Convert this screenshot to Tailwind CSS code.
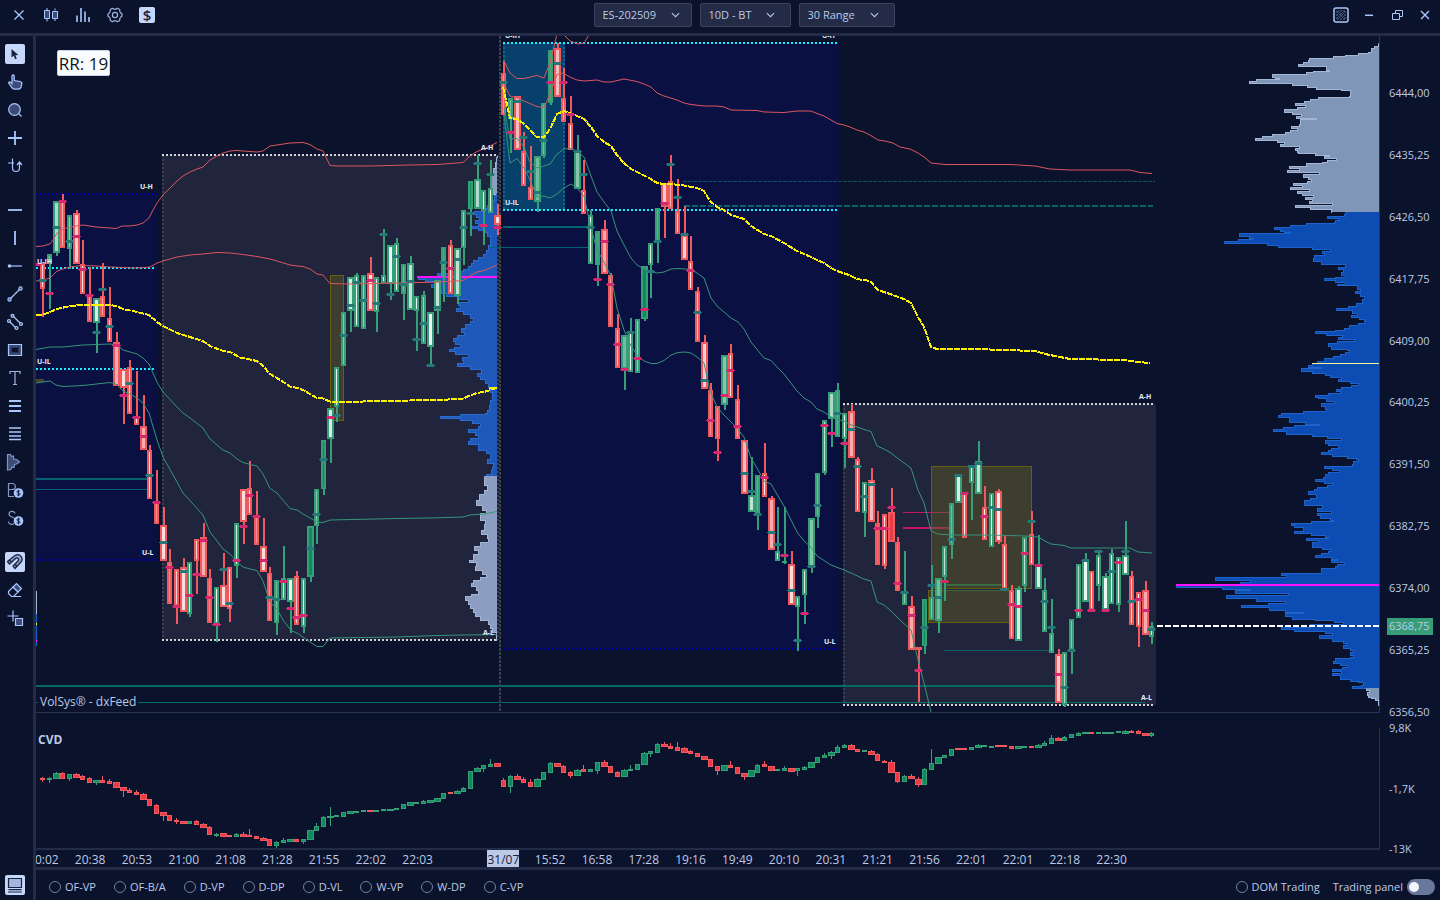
<!DOCTYPE html>
<html lang="en">
<head>
  <meta charset="UTF-8">
  <meta name="viewport" content="width=device-width, initial-scale=1.0">
  <title>VolSys - ES-202509</title>
  <script src="https://cdn.jsdelivr.net/npm/@tailwindcss/browser@4"></script>
</head>
<body class="h-screen flex flex-col overflow-hidden bg-[#0b122b] text-[#bccae8] text-[12px] leading-4 font-['Open_Sans','Noto_Sans',sans-serif]">

  <!-- top bar -->
  <header class="h-9 shrink-0 flex items-start justify-between border-b-3 border-[#242b47] pl-[11px] pr-[7px] pt-[3px]">
    <div class="h-6 flex items-center gap-4 text-[#a9c7ff]">
      <button aria-label="Close chart" class="size-4"><svg viewBox="0 0 16 16" class="size-4" fill="none" stroke="currentColor" stroke-width="1.3"><path d="M3.5 3.5l9 9M12.500 3.500l-9 9"/></svg></button>
      <button aria-label="Candle style" class="size-4"><svg viewBox="0 0 16 16" class="size-4" fill="#3c4b78" stroke="currentColor"><path d="M4 1v2M4 12v2.500M12 1.500v2M12 12v2"/><path d="M1.500 3.500h5v8h-5zM9.500 4.500h5v7h-5z"/></svg></button>
      <button aria-label="Indicators" class="size-4"><svg viewBox="0 0 16 16" class="size-4" fill="none" stroke="currentColor" stroke-width="1.600"><path d="M2 15V8.500M6 15V1M10 15V4.500M14 15v-5"/></svg></button>
      <button aria-label="Settings" class="size-4"><svg viewBox="0 0 16 16" class="size-4" fill="none" stroke="#9fb4de" stroke-width="1.200"><path stroke-linejoin="round" d="M5.500 1.300l1.500.9h2l1.500-.9 2.200 1.300.1 1.900 1 1.500 1.200 1v2l-1.200 1-1 1.500-.1 1.900-2.200 1.300-1.500-.9H7l-1.500.9-2.200-1.300-.1-1.900-1-1.500L1 9V7l1.200-1 1-1.500.1-1.900z"/><circle cx="8" cy="8" r="2.600"/></svg></button>
      <button aria-label="Account" class="size-4 rounded-xs bg-[#c5d7fb] text-[#18213f] text-[15px] leading-4 font-semibold">$</button>
    </div>

    <div class="flex gap-2">
      <label class="relative block">
        <select aria-label="Symbol" class="appearance-none w-[98px] h-6 pl-2 rounded-xs border border-[#3b4360] bg-[#232b46] text-[11px]"><option>ES-202509</option></select>
        <svg viewBox="0 0 10 6" class="absolute right-3 top-[9px] w-[9px] h-[6px]" fill="none" stroke="currentColor" stroke-width="1.200"><path d="M1 .8l4 4 4-4"/></svg>
      </label>
      <label class="relative block">
        <select aria-label="Template" class="appearance-none w-[91px] h-6 pl-2 rounded-xs border border-[#3b4360] bg-[#232b46] text-[11px]"><option>10D - BT</option></select>
        <svg viewBox="0 0 10 6" class="absolute right-4 top-[9px] w-[9px] h-[6px]" fill="none" stroke="currentColor" stroke-width="1.200"><path d="M1 .8l4 4 4-4"/></svg>
      </label>
      <label class="relative block">
        <select aria-label="Time frame" class="appearance-none w-[96px] h-6 pl-2 rounded-xs border border-[#3b4360] bg-[#232b46] text-[11px]"><option>30 Range</option></select>
        <svg viewBox="0 0 10 6" class="absolute right-4 top-[9px] w-[9px] h-[6px]" fill="none" stroke="currentColor" stroke-width="1.200"><path d="M1 .8l4 4 4-4"/></svg>
      </label>
    </div>

    <div class="h-6 flex items-center gap-3 text-[#a9c7ff]">
      <button aria-label="Background" class="size-4"><svg viewBox="0 0 16 16" class="size-4"><rect x="1" y="1" width="14" height="14" rx="2" fill="#0b122b" stroke="currentColor" stroke-width="1.500"/><path d="M3 6l3-3M3 9l6-6M3 12l9-9M4 13l9-9M7 13l6-6M10 13l3-3M10 3l3 3M7 3l6 6M4 3l9 9M3 4l9 9M3 7l6 6M3 10l3 3" stroke="#5f74a3" stroke-width=".5"/></svg></button>
      <button aria-label="Minimize" class="size-4"><svg viewBox="0 0 16 16" class="size-4" stroke="currentColor" stroke-width="1.500"><path d="M4 8.300h8"/></svg></button>
      <button aria-label="Restore" class="size-4"><svg viewBox="0 0 16 16" class="size-4" fill="none" stroke="currentColor"><path d="M3.500 6.500h7v6h-7zM6.500 6V3.500h7v6H11"/></svg></button>
      <button aria-label="Close" class="size-4"><svg viewBox="0 0 16 16" class="size-4" fill="none" stroke="currentColor" stroke-width="1.400"><path d="M4 4l8 8M12 4l-8 8"/></svg></button>
    </div>
  </header>

  <div class="flex-1 min-h-0 flex">
    <!-- drawing tools, filled by script -->
    <nav id="tools" class="w-9 shrink-0 flex flex-col border-r-3 border-[#242b47] pt-1 pb-[1px] text-[#a9c7ff]"></nav>

    <div class="flex-1 min-w-0 flex flex-col">
      <main class="flex-1 min-h-0 flex">
        <div class="flex-1 min-w-0 flex flex-col">
          <section class="relative flex-1 min-h-0">
            <svg id="chart" class="block w-full h-full" viewBox="36 36 1344 677" preserveAspectRatio="none"></svg>
            <div class="absolute left-[21px] top-[14px] w-[53px] h-[26px] rounded-xs border border-[#c9d4e6] bg-[#f8fcff] text-[#10131c] text-[17px] leading-[25px] text-center whitespace-nowrap">RR: 19</div>
            <p class="absolute left-[2px] bottom-[3px] px-[2px] bg-[#0b122b]">VolSys® - dxFeed</p>
          </section>
          <section class="relative h-[137px] shrink-0">
            <svg id="cvd" class="block w-full h-full" viewBox="36 713 1344 137" preserveAspectRatio="none"></svg>
            <h2 class="absolute left-[2px] top-[19px] font-bold">CVD</h2>
          </section>
          <div class="h-[17px] shrink-0 overflow-hidden leading-[20px]">
            <div id="times" class="flex -ml-4 text-center"></div>
          </div>
        </div>

        <!-- price scale -->
        <aside class="relative w-[60px] shrink-0 flex flex-col pt-[49px] pb-[10px] pl-[9px] text-[11px]">
          <div id="prices" class="flex-1 flex flex-col justify-between"></div>
          <div class="h-[137px] flex flex-col justify-between">
            <span>9,8K</span><span>-1,7K</span><span>-13K</span>
          </div>
          <span class="absolute left-[7px] top-[582px] w-[46px] h-[17px] pl-[2px] bg-[#369d77]">6368,75</span>
        </aside>
      </main>

      <footer class="h-[33px] shrink-0 flex items-center justify-between border-t-3 border-[#242b47] pl-[13px] pr-[5px] pt-[3px] text-[11px]">
        <div id="overlays" class="flex gap-[18px]"></div>
        <div class="flex items-center gap-[13px]">
          <label class="flex items-center gap-1"><input type="checkbox" class="appearance-none size-3 rounded-full border border-[#72809f]">DOM Trading</label>
          <label class="flex items-center gap-1">Trading panel
            <span class="relative block w-7 h-4">
              <input type="checkbox" class="appearance-none block w-7 h-4 rounded-full bg-[#68779b]">
              <span class="absolute left-[2px] top-[3px] size-[10px] rounded-full bg-[#f2f6ff] pointer-events-none"></span>
            </span>
          </label>
        </div>
      </footer>
    </div>
  </div>

  <script>
    const GREEN = '#369f78', RED = '#f0595d', TEAL = '#257877', PINK = '#d8266f';

    // ---- sidebar ----
    const F = 'fill="#3c4b78"';
    const coin = '<circle cx="12.500" cy="12" r="4.800" fill="#a9c7ff" stroke="none"/><path stroke="#18213f" stroke-width="1" d="M14.200 10.500c-.6-1-3.400-1-3.400.4s3.400.8 3.400 2.200-2.800 1.500-3.600.4M12.500 8.700v6.600"/>';
    const tools = [
      ['Cursor', '<path d="M5.500 4v8.500l2.200-1.700 1.500 3.400 1.600-.8-1.500-3.200 3-.3z" fill="#18213f" stroke="none"/>', 'on'],
      ['Hand', `<path ${F} d="M6 10.500V3c0-1.400 2.200-1.400 2.200 0v4.500l5.800 1c1.500.3 2 1 1.800 2.300l-.7 3.200c-.4 1.500-1.300 2.200-3 2.200H8.500c-1.300 0-2-.5-2.700-1.500L2.500 9.800C3.300 8.500 4.800 8.700 6 10.500z"/>`],
      ['Zoom', `<circle ${F} cx="8.500" cy="8.500" r="5.800"/><path d="M13 13l2.500 2.500"/>`],
      ['Crosshair', '<path stroke-width="1.800" d="M9 2v14M2 9h14"/>'],
      ['Sync cursor', '<path d="M6.500 1.500v9.500a3.500 3.500 0 0 0 7 0V5.500M2 6h6M11 8l2.500-3L16 8"/>'],
      'gap',
      ['Horizontal line', '<path stroke-width="1.800" d="M2 9h14"/>'],
      ['Vertical line', '<path stroke-width="1.800" d="M9 2v14"/>'],
      ['Ray', '<circle cx="3.500" cy="9" r="1.800" fill="currentColor" stroke="none"/><path d="M4 9h12"/>'],
      ['Trend line', `<path d="M4 14L14 4"/><circle ${F} cx="3.500" cy="14.500" r="1.600"/><circle ${F} cx="14.500" cy="3.500" r="1.600"/>`],
      ['Channel', `<path d="M3 8l7 7M7 3l8 8"/><circle ${F} cx="3" cy="8" r="1.500"/><circle ${F} cx="10.500" cy="15" r="1.500"/><circle ${F} cx="6.500" cy="2.800" r="1.500"/><circle ${F} cx="15" cy="11" r="1.500"/>`],
      ['Rectangle', '<path d="M2.500 3.500h13v11h-13z" fill="#3c4b78"/><path d="M5.500 6.500h7v5h-7z" fill="#0b122b" stroke="#2a3558"/>'],
      ['Text', '<path stroke="#9fb4de" d="M4 5V2.500h10V5M9 2.500v13M7 15.500h4"/>'],
      ['Levels', '<path stroke-width="1.800" d="M3 4h12M3 9h12M3 14h12"/>'],
      ['Fibonacci', '<path stroke-width="1.500" d="M3 3h12M3 7h12M3 11h12M3 14.500h12"/>'],
      ['Volume profile', `<path ${F} stroke="#7f96c4" d="M1.500 1.500h3l1 2 2-.5v3l3 .5 3 2.500-3 2-2 .5-.5 3-2-.5-1 2.500-3.500.5z"/>`],
      ['Buy', `<path stroke="#8298c5" d="M8 15.500H2.500V2.500H6c4.500 0 4.500 6 0 6H2.500M6 8.500h2"/>${coin}`],
      ['Sell', `<path stroke="#8298c5" d="M9 4.500c-.5-3-6-3-6 .5C3 9 9 7 9 11M8 14.500c-2 2-5.500.5-5.500-2"/>${coin}`],
      'gap',
      ['Magnet', '<path stroke="#18213f" stroke-width="1.300" fill="#8ea3cf" d="M1.500 8.500L9 2.500c5-3 9 3 6 6.500L9 15.500l-2-2.500 5-5c1.500-2-.5-4-2.500-2.500L3.500 11zM3.500 7l2 2.300M9 11.200l2 2.300"/>', 'on'],
      ['Eraser', `<path d="M2.500 10.500L7 6l5 5-4.500 4.500H5.500L2.500 12.500zM5 15.500h10"/><path ${F} d="M7 6l3.500-3.500 5 5L12 11z"/>`],
      ['Add shape', `<path d="M7 1.500v11M1.500 7h11"/><path ${F} d="M9.500 9.500h7v7h-7z"/>`],
      'end',
      ['Log', '<path d="M2.500 2.500h13v9h-13z" fill="#a3b5db" stroke="#18213f"/><path stroke="#18213f" d="M2.500 13.700h13M2 16h14"/>', 'on'],
    ];
    let nav = '', push = '';
    tools.forEach(t => {
      if (t === 'gap') { push = 'mt-4'; return; }
      if (t === 'end') { push = 'mt-auto'; return; }
      nav += `<button aria-label="${t[0]}" class="${push} w-[30px] h-7 flex items-center justify-center">
        <span class="size-5 flex items-center justify-center rounded-xs ${t[2] ? 'bg-[#c5d7fb]' : ''}"><svg viewBox="0 0 18 18" class="size-[18px]" fill="none" stroke="currentColor" stroke-width="1.200">${t[1]}</svg></span></button>`;
      push = '';
    });
    document.getElementById('tools').innerHTML = nav;

    // ---- scales and footer ----
    document.getElementById('prices').innerHTML =
      ['6444,00', '6435,25', '6426,50', '6417,75', '6409,00', '6400,25', '6391,50', '6382,75', '6374,00', '6365,25', '6356,50']
        .map(p => `<span>${p}</span>`).join('');
    const day1 = ['20:02', '20:38', '20:53', '21:00', '21:08', '21:28', '21:55', '22:02', '22:03'];
    const day2 = ['31/07', '15:52', '16:58', '17:28', '19:16', '19:49', '20:10', '20:31', '21:21', '21:56', '22:01', '22:01', '22:18', '22:30'];
    document.getElementById('times').innerHTML =
      `<div class="w-[421px] shrink-0 grid grid-cols-9">${day1.map(t => `<span>${t}</span>`).join('')}</div>
       <div class="w-[655px] shrink-0 ml-[39px] grid grid-cols-14">${day2.map((t, i) => `<span class="${i ? '' : 'justify-self-center w-8 bg-[#bccae8] text-[#18213f]'}">${t}</span>`).join('')}</div>`;
    document.getElementById('overlays').innerHTML =
      ['OF-VP', 'OF-B/A', 'D-VP', 'D-DP', 'D-VL', 'W-VP', 'W-DP', 'C-VP']
        .map(n => `<label class="flex items-center gap-1"><input type="checkbox" class="appearance-none size-3 rounded-full border border-[#72809f]">${n}</label>`).join('');

    // ---- price candles ----
    // x, high, top, bottom, low, up, wide, fill 0-9, marker y, marker up
    const candles = [
      [42,263,263,289,317,0,0,7,280,1],[49,254,254,263,309,1,0,4,293,0],[56,201,201,253,256,1,1,6,227,1],[62,194,201,248,248,0,0,5,201,0],[69,215,215,249,269,1,0,5,241,1],
      [76,210,213,264,264,0,1,7,236,0],[82,240,264,294,294,0,0,8,269,0],[89,267,295,322,322,0,0,4,295,0],[96,298,298,323,353,1,1,8,332,1],[102,263,296,317,317,0,0,4,289,1],
      [109,287,318,342,342,0,0,8,326,1],[116,332,342,386,386,0,1,5,345,0],[123,369,369,388,424,0,1,8,395,0],[129,360,367,414,414,0,0,7,383,1],[136,371,417,425,425,0,0,8,417,0],
      [143,395,426,450,450,0,1,5,436,0],[149,445,450,499,499,0,0,8,475,1],[156,470,502,524,524,0,0,3,502,0],[163,507,525,561,561,0,1,8,542,1],[169,549,562,604,604,0,0,3,567,0],
      [176,569,569,606,624,0,0,7,606,0],[183,558,567,612,612,0,1,8,571,1],[189,562,562,614,617,1,0,9,595,0],[196,539,539,561,594,0,0,7,574,0],[203,523,537,577,577,0,1,5,540,0],
      [209,569,578,623,623,0,0,3,597,0],[216,587,587,624,642,1,0,9,624,0],[223,553,585,607,607,0,1,8,569,1],[229,567,567,609,622,0,0,9,603,1],[236,523,523,566,578,1,0,8,560,0],
      [243,489,489,522,544,0,1,8,526,0],[249,461,488,515,515,0,0,8,495,0],[256,491,516,545,545,0,0,3,516,0],[263,518,546,572,572,0,1,8,560,0],[269,567,573,621,621,0,0,4,597,1],
      [276,580,580,623,635,1,0,3,599,1],[283,546,578,600,600,1,0,8,581,0],[290,578,578,602,633,1,1,9,608,0],[296,571,576,625,625,0,0,6,617,0],[303,578,578,627,633,1,0,8,615,0],
      [310,526,526,577,582,1,1,0,548,1],[316,489,489,526,544,1,0,4,514,1],[323,440,440,489,495,1,0,0,459,1],[330,408,408,439,463,1,1,8,417,0],[336,367,367,407,422,1,0,9,415,1],
      [343,312,312,366,366,1,0,4,335,1],[350,277,277,311,332,1,1,8,305,1],[356,273,275,327,327,1,0,9,282,1],[363,275,275,329,329,1,0,5,300,1],[370,257,273,311,311,0,1,8,280,0],
      [376,277,277,312,332,1,0,8,303,1],[383,229,275,283,283,1,0,9,234,1],[390,245,245,284,300,1,1,9,294,1],[396,238,243,292,292,1,0,9,256,1],[403,264,264,294,320,1,0,3,284,1],
      [410,256,263,310,310,1,1,7,281,1],[416,296,296,311,351,1,0,9,339,1],[423,291,295,344,344,1,0,5,323,1],[430,312,312,347,366,1,1,9,365,1],[437,280,280,311,334,1,1,7,307,1],
      [443,247,247,277,302,1,0,1,262,1],[450,240,245,294,294,0,0,9,268,0],[457,248,248,296,304,1,1,7,259,1],[463,210,210,248,265,1,0,5,227,1],[470,181,181,209,236,1,0,0,213,1],
      [477,155,179,209,209,1,1,6,163,1],[483,190,190,211,245,1,0,9,225,0],[490,160,188,213,213,1,0,9,174,1],[497,204,215,225,235,0,1,8,227,0],
      [503,61,73,115,115,0,0,4,82,1],[510,98,98,119,153,1,0,3,132,0],[517,96,96,150,150,0,1,6,101,1],[523,132,151,186,186,0,0,8,137,1],[530,146,187,200,200,0,0,6,171,1],
      [537,156,156,202,212,1,1,3,192,1],[543,103,103,156,158,1,0,3,140,1],[550,50,50,103,105,1,0,1,82,0],[557,43,48,97,97,0,1,6,63,1],[563,68,98,122,122,0,0,5,82,0],
      [570,96,123,150,150,0,0,9,114,0],[577,135,151,189,189,1,1,4,151,1],[583,160,190,214,214,0,0,9,174,1],[590,210,215,264,264,1,0,9,227,1],[597,231,231,265,286,1,0,1,279,0],
      [604,220,229,274,274,0,1,5,241,0],[610,273,275,327,327,0,0,3,284,0],[617,314,328,368,368,0,0,6,344,0],[624,335,335,369,390,1,1,3,369,0],[630,318,332,372,372,1,0,9,332,1],
      [637,319,319,373,373,1,0,5,358,0],[644,266,266,319,321,1,1,0,309,0],[650,243,243,265,298,1,0,8,271,1],[657,208,208,241,263,1,0,2,241,1],[664,183,183,207,238,0,1,7,203,0],
      [670,155,181,209,209,0,0,5,164,1],[677,179,211,234,234,0,0,7,197,1],[684,206,235,260,260,0,1,7,234,1],[690,236,261,290,290,0,0,8,270,0],[697,287,291,342,342,0,0,6,312,1],
      [704,335,342,389,389,0,1,7,380,1],[710,383,390,437,437,0,0,3,420,0],[717,406,406,439,461,0,0,4,452,0],[724,355,355,405,410,1,1,4,395,0],[730,344,353,398,398,0,0,8,370,0],
      [737,385,399,439,439,0,0,6,426,0],[744,440,440,494,494,0,1,6,473,1],[751,457,495,512,512,1,1,7,491,1],[757,475,475,513,530,1,0,2,514,1],[764,443,473,497,497,0,0,9,477,0],
      [771,496,498,550,550,0,1,5,532,1],[777,507,551,561,561,1,0,9,544,1],[784,507,561,563,564,1,0,1,555,0],[791,551,564,605,605,0,1,8,590,1],[797,596,596,607,651,1,0,8,640,1],
      [804,569,569,595,624,1,0,8,613,0],[811,518,518,568,573,1,1,4,566,1],[817,473,473,517,528,1,0,3,505,1],[824,420,420,473,475,1,0,7,425,0],[831,392,392,419,447,1,1,6,433,0],
      [837,383,390,437,437,1,0,2,413,1],[844,413,413,439,468,1,0,9,443,0],[851,404,411,458,458,0,1,5,429,1],[857,457,459,512,512,0,0,9,466,1],[864,482,482,513,537,1,0,9,496,1],
      [871,468,480,522,522,0,1,6,484,1],[877,511,523,565,565,0,0,1,528,0],[884,514,514,566,569,0,0,8,528,0],[891,488,512,542,542,0,1,0,507,0],[897,537,542,591,591,0,0,2,583,0],
      [904,551,592,605,605,1,0,4,592,1],[911,596,606,650,650,0,1,5,615,0],[918,647,647,650,702,0,1,1,670,0],[924,599,599,646,654,1,0,0,627,1],[931,565,597,620,620,1,0,4,585,1],
      [938,578,578,621,633,1,1,3,597,1],[944,546,546,577,601,1,0,7,581,0],[951,503,503,545,559,1,0,3,539,1],[958,475,475,503,503,1,1,8,475,1],[964,493,493,538,538,0,0,9,493,0],
      [971,466,466,483,520,1,0,9,466,1],[978,441,461,494,494,1,1,7,463,1],[984,486,507,540,540,0,0,9,516,0],[991,493,493,547,547,1,0,9,507,1],[998,489,491,542,544,0,1,9,509,1],
      [1004,536,544,589,589,0,0,9,589,1],[1011,585,590,639,639,0,0,7,604,0],[1018,586,588,641,641,1,1,8,606,0],[1024,537,537,586,592,1,0,7,553,0],[1031,511,534,565,565,0,0,9,521,1],
      [1038,535,565,589,589,1,1,8,565,0],[1044,578,590,632,632,1,0,5,601,1],[1051,599,633,653,653,1,0,5,627,1],[1058,649,654,703,703,0,1,7,674,0],[1064,652,652,705,707,1,0,6,687,1],
      [1071,619,619,650,674,1,0,4,650,1],[1078,564,564,618,618,1,0,6,610,0],[1085,553,560,602,602,1,1,9,560,1],[1091,571,571,610,610,0,0,9,610,0],[1098,551,555,586,601,1,0,9,551,1],
      [1105,573,576,610,610,1,1,9,610,0],[1111,549,553,604,604,1,0,9,571,1],[1118,557,557,605,612,1,0,9,562,0],[1125,521,555,575,575,1,1,9,551,1],[1131,571,576,625,625,0,0,7,601,1],
      [1138,592,592,627,647,0,0,9,599,0],[1145,581,590,635,635,0,1,5,610,0],[1151,622,626,637,644,1,0,8,629,1],
    ];

    const rect = (x, y, w, h, fill, more = '') => `<rect x="${x}" y="${y}" width="${w}" height="${h}" fill="${fill}" ${more}/>`;
    const hline = (x1, x2, y, color, w = 1, dash = '') =>
      `<path d="M${x1} ${y}H${x2}" stroke="${color}" stroke-width="${w}" stroke-dasharray="${dash}"/>`;
    const vline = (x, y1, y2, color, w = 1, dash = '') =>
      `<path d="M${x} ${y1}V${y2}" stroke="${color}" stroke-width="${w}" stroke-dasharray="${dash}"/>`;
    const band = (pts, color, w = 1, dash = '') =>
      `<polyline points="${pts}" fill="none" stroke="${color}" stroke-width="${w}" stroke-dasharray="${dash}" shape-rendering="${w > 1 ? 'crispEdges' : 'auto'}"/>`;

    // stepped volume profile that grows leftwards from the base
    function profile(base, rows, fill, edge) {
      const p = rows.split(' ').map(r => r.split(',').map(Number));
      let d = '';
      p.forEach(([y, x], i) => { d += (i ? 'V' + y + 'H' + x : 'M' + x + ' ' + y); });
      const end = p[p.length - 1][0], start = p[0][0];
      return `<path d="${d}H${base}V${start}Z" fill="${fill}"/><path transform="translate(0 .5)" d="${d}" fill="none" stroke="${edge}"/>`;
    }

    let s = '';
    // session boxes
    s += rect(36, 194, 121, 367, '#0b1043') + hline(36, 157, 194, '#00009a', 2, '2 2') + hline(36, 157, 560, '#00009a', 2, '2 2');
    s += rect(162, 155, 336, 485, '#20243d') + vline(163, 155, 640, '#3a3f56', 2, '2 2') + vline(498, 155, 640, '#3a3f56', 2, '2 2');
    s += rect(503, 43, 336, 606, '#0b1043') + hline(503, 839, 649, '#00009a', 2, '2 2') + vline(503.5, 210, 649, '#070a78', 1, '2 2');
    s += rect(503, 43, 62, 167, '#08406c') + vline(564, 43, 210, '#0c6c95', 2, '2 2') + vline(504, 43, 210, '#0c6c95', 2, '2 2');
    s += rect(843, 404, 313, 301, '#20243d') + vline(844, 404, 705, '#3a3f56', 2, '2 2');

    // levels
    s += hline(36, 148, 479, '#036270', 2) + hline(36, 148, 489.5, '#036270');
    s += hline(36, 1055, 686, '#046b63', 2) + hline(36, 1145, 702.5, '#046b63');
    s += hline(683, 1155, 181.5, '#0b5060', 1, '4 1') + hline(684, 1153, 206, '#0b6265', 2, '6 2');
    s += hline(903, 950, 512.5, '#c71463') + hline(903, 950, 528, '#c71463', 2);
    s += hline(944, 1050, 650.5, '#0b6265');

    // volume profiles
    s += profile(497, '155,497 157,496 162,495 168,493 175,491 182,490 188,492 194,496', '#8b9dc0', '#a3b4d4');
    s += profile(497, '194,496 195,494 200,491 205,487 208,482 211,474 214,476 217,479 220,475 223,478 226,472 228,478 230,485 232,487 236,490 245,488 250,486 254,483 257,478 260,473 263,471 266,468 269,463 271,450 273,437 275,440 277,418 279,425 281,435 284,431 287,440 290,441 293,446 296,457 299,468 302,458 305,460 308,456 311,463 314,470 318,473 321,470 324,465 328,461 332,464 335,457 338,453 341,455 344,460 347,454 349,449 351,455 354,468 357,462 360,463 363,457 366,470 369,481 373,477 376,480 379,485 383,488 387,490 392,492 400,490 405,489 410,487 413,485 414,460 416,440 418,460 420,472 423,480 426,478 429,468 432,475 435,478 438,470 441,468 444,478 447,478 450,486 453,490 456,490 459,487 463,493 467,492 470,491 474,486 476,484', '#1e58b8', '#2b6cd0');
    s += profile(497, '476,484 480,484 485,487 490,484 494,479 500,476 505,482 510,486 513,480 516,480 520,485 524,484 530,481 534,487 538,488 542,480 546,474 550,478 554,473 560,469 562,476 566,475 570,482 574,486 577,480 580,473 583,471 586,476 590,478 594,471 596,465 600,468 604,470 608,473 612,475 616,480 620,488 624,490 628,492 632,496 640,497', '#8b9dc0', '#a3b4d4');
    s += profile(1379, '43,1378 46,1374 48,1371 52,1368 53,1358 55,1345 56,1333 58,1309 60,1308 62,1303 64,1298 66,1326 70,1329 71,1313 72,1306 74,1272 77,1275 78,1279 79,1256 81,1249 83,1292 85,1307 87,1316 89,1341 90,1350 96,1349 97,1318 99,1310 101,1304 103,1295 105,1305 107,1297 109,1284 112,1292 114,1301 116,1296 118,1316 119,1300 124,1299 126,1291 128,1297 130,1290 132,1285 134,1272 136,1262 138,1255 140,1277 142,1284 144,1280 146,1299 148,1295 150,1297 152,1298 153,1315 155,1329 156,1324 158,1336 160,1327 162,1322 163,1306 166,1289 168,1299 170,1287 172,1319 174,1303 177,1308 179,1311 181,1307 183,1293 185,1302 187,1290 189,1309 191,1297 193,1302 195,1313 197,1305 199,1312 201,1309 203,1332 205,1295 207,1310 209,1331 212,1332', '#8096b9', '#a3b6d6');
    s += profile(1379, '212,1345 214,1344 216,1327 218,1338 220,1335 222,1334 223,1306 225,1290 227,1274 229,1280 231,1284 232,1290 233,1239 236,1249 238,1252 239,1238 241,1224 243,1267 245,1278 247,1312 249,1330 251,1322 253,1324 255,1314 258,1313 261,1321 264,1345 267,1338 269,1343 272,1341 275,1345 277,1335 278,1324 280,1335 282,1345 284,1337 285,1357 289,1360 291,1355 293,1360 296,1364 299,1362 303,1356 306,1348 308,1336 310,1352 313,1357 315,1351 317,1359 319,1364 321,1365 323,1358 325,1349 328,1344 330,1335 331,1315 333,1326 335,1342 337,1338 339,1354 341,1337 343,1328 346,1331 349,1347 350,1349 352,1345 354,1340 356,1333 358,1324 361,1317 363,1312 365,1308 367,1321 368,1301 371,1312 373,1325 375,1330 377,1341 379,1338 381,1350 383,1358 385,1351 387,1341 389,1336 391,1340 393,1328 395,1315 397,1318 398,1326 401,1334 403,1321 406,1325 409,1326 411,1303 413,1281 415,1278 417,1289 422,1305 424,1319 425,1294 427,1283 429,1273 431,1286 434,1312 436,1327 438,1341 440,1325 443,1328 445,1338 448,1331 450,1328 452,1321 454,1332 456,1347 458,1356 459,1358 461,1353 464,1352 466,1324 468,1332 470,1339 472,1328 474,1325 477,1323 479,1315 481,1324 483,1332 485,1327 487,1317 489,1314 491,1308 494,1316 498,1310 500,1304 505,1322 508,1317 511,1331 513,1317 515,1320 518,1330 520,1333 521,1311 523,1291 525,1294 527,1303 531,1294 533,1311 535,1325 537,1328 538,1306 540,1318 542,1312 547,1322 549,1330 551,1328 553,1321 555,1315 557,1331 559,1337 560,1331 562,1344 564,1337 566,1335 568,1321 571,1321 573,1281 575,1286 577,1215 580,1250 582,1240 584,1176 587,1222 589,1250 590,1235 593,1288 595,1226 598,1256 601,1285 603,1268 605,1241 607,1269 610,1285 612,1303 613,1285 616,1292 619,1315 620,1334 622,1343 624,1310 627,1281 629,1294 631,1325 633,1332 635,1319 638,1332 641,1343 643,1346 645,1343 648,1350 650,1353 652,1350 655,1353 657,1350 658,1335 661,1333 663,1340 665,1347 667,1342 669,1332 671,1341 673,1332 675,1340 679,1350 681,1358 682,1363 685,1361 686,1352 688,1366', '#0d4db3', '#1d63cc');
    s += profile(1379, '688,1366 690,1369 692,1367 695,1368 697,1371 698,1375 700,1378 705,1379', '#8096b9', '#a3b6d6');
    s += hline(1312, 1379, 363.5, '#f4f59a') + hline(1176, 1379, 585, '#ff12ff', 2);
    s += hline(417, 497, 277, '#ff12ff', 2) + hline(489, 497, 388, '#ffee00', 2);
    s += vline(36.5, 591, 614, '#a3b6d6') + vline(36.5, 614, 646, '#1d63cc') + rect(36, 623, 1, 2, '#ffee00') + rect(36, 640, 1, 2, '#ff12ff');
    s += hline(503, 588, 227, '#036270', 2) + hline(490, 588, 247.5, '#036270');

    // imbalance areas
    const olive = 'stroke="#65600f" fill-opacity=".75"';
    s += rect(330.5, 275.5, 13, 145, '#47462c', olive) + rect(931.5, 466.5, 100, 122, '#47462c', olive) + rect(928.5, 590.5, 83, 32, '#47462c', olive) + rect(36, 379, 8, 3, '#47462c');
    s += hline(932, 950, 512.5, '#8f3a50') + hline(932, 950, 528, '#8f3a50', 2) + hline(944, 1004, 585, '#3a6a40', 2) + hline(944, 1004, 590.5, '#3a6a40');

    // session separator and dotted extremes
    s += vline(500, 36, 712, '#3d404e', 2, '3 1');
    [[36, 154, 268], [36, 154, 369], [503, 838, 43], [503, 838, 210]].forEach(l => { s += hline(...l, '#19f0ff', 2, '2 2'); });
    [[162, 497, 155], [162, 497, 640], [843, 1154, 404], [843, 1154, 705]].forEach(l => { s += hline(...l, '#d3d4d8', 2, '2 2'); });

    // candle bodies first, their markers go on top of the bands
    let bodies = '', marks = rect(36, 263, 5, 3, PINK);
    candles.forEach(([x, hi, top, bot, lo, up, wide, fill, my, mup]) => {
      const c = up ? GREEN : RED, w = wide ? 7 : 5, left = wide ? x - 3 : x - 2;
      bodies += rect(x, hi, 2, lo - hi, c) + rect(left, top, w, bot - top, c);
      if (bot - top > 4) {
        bodies += fill === 0
          ? rect(left + 2, top + 2, w - 4, bot - top - 4, up ? '#0f8a5c' : '#ea3a44')
          : rect(left + 2, top + 2, w - 4, bot - top - 4, '#fff', `fill-opacity="${fill / 10}"`);
      }
      const m = mup ? TEAL : PINK;
      marks += rect(x - 3, my - 1, 7, 3, m) + rect(x - 4, my, 9, 1, m);
    });
    s += bodies;

    const up1 = '#d9575f', dn1 = '#36947a';
    s += band('36,246.5 43,246 50,244 53,240 57,233 63,229 70,227 76,226 83,225 96,227 110,228 116,228.5 122,226 130,226 137,225 143,223 149,218 153,210 157,203 163,195 170,188 177,181 183,176 190,172 197,169 203,167 210,160 217,156 223,153 230,151 237,150.5 243,151 257,152 263,151 270,146 277,145 290,143 303,142.5 310,144.5 317,149 323,151 330,165.5 337,166 370,166 410,165 437,164.5 450,163.5 463,162.5 470,156 477,151.5 484,149 490,146 497,142.5', up1);
    s += band('36,281 43,280 50,278 53,275 57,271 63,269 70,267 77,266 83,265.5 97,266 110,267 137,268 150,267 157,263 163,261 177,257 190,255 203,254 217,252.5 230,253 243,254.5 257,256.5 270,259 277,261 290,265 297,266 303,266.5 310,269 317,274 323,275 330,283.5 350,284 400,283 440,282 463,280.5 470,276 477,272 484,270.5 490,268 497,265', up1);
    s += band('36,349.5 50,347 63,347 83,345 110,344 117,345 123,350 137,354 143,358 149,364 157,382 163,392 177,407 183,413 190,418 203,428 210,439 223,450 230,453 237,459 243,462.5 250,464.5 257,466 263,474 270,488.5 277,493 290,508.5 297,510 303,514 310,518 317,522 323,522.5 330,520 397,518.5 430,518 463,517 470,515 484,514 497,511.5', dn1);
    s += band('36,383 50,381 56,385 63,386.5 83,385.5 110,382.5 116,384 123,391 130,394 137,398 143,403 149,413 157,440 163,457 177,482 183,493 203,515 210,532 217,541 223,549 230,554 237,562 243,567 250,569 257,570.5 263,581 270,602 277,609 283,620 291,630.5 297,633 303,637 310,642 317,646.5 323,646.5 330,638 397,637 437,635.5 463,635 497,634.5', dn1);
    s += band('504,61 510,73 517,78.5 524,78.5 537,75.5 544,78 550,63 557,34', up1) + band('564,35 570,41 578,44 584,43 589,35', up1);
    s += band('504,84 510,96 517,98 524,101 537,106.5 544,107.5 550,94 557,74.5 563,73 570,77 577,80 584,81 597,80 604,82 611,82 624,79 637,81.5 644,84 651,87 657,93 664,96 677,100 684,103 691,104.5 704,106 717,106 724,107 731,110 757,110.5 764,112 784,112.5 797,111 811,111 817,113.5 824,116 831,120 837,123.5 844,125 850,127 857,130 864,132 870,135 878,140 885,141 893,143 900,147 910,149 918,153 924,157 931,163 945,164.5 1010,164.5 1035,166 1050,169 1070,170 1130,170 1140,172.5 1152,173.5', up1);
    s += band('504,108 510,139 517,138.5 524,147 530,162 537,168 544,166 550,164 557,154 564,149 571,148.5 577,151 584,157 591,176 597,192 604,202 611,211 617,231 624,245 631,258 637,265 644,269 651,271.5 657,273 664,272 671,269 678,268.5 691,269.5 697,273 704,278 711,298 717,306 724,312 731,318 738,322 744,329 751,342 764,358 771,360.5 777,367 784,374 797,391 804,398 811,402 817,409 824,412 831,417 838,419.5 844,421 850,424.5 864,429.5 871,431.5 877,446 884,449 891,453 900,460 911,468 918,490 924,503 931,531 938,534 951,535 990,535 1025,536 1038,537 1045,541 1051,544 1064,545.5 1071,548 1130,548 1138,552 1152,553', dn1);
    s += band('504,115 510,163 517,158.5 524,168 530,180 537,197 544,196 550,198 557,194 564,188 571,184 577,188 584,196 587,210 591,228 597,250 604,262 611,276 617,308 624,330 631,346 637,355 644,361 651,363.5 657,363.5 664,360.5 671,355 678,352.5 685,352 691,353 697,357 704,363 710,391 717,407 724,415 731,422 737,428 744,437 751,458 757,468 764,481 771,484 778,496 784,506 797,532 804,541 811,547 817,556 831,565 844,570 851,573 864,579 871,581 877,602 884,605 891,611 900,620 911,630 918,660 924,683 931,712', dn1);
    const vwap = ['36,315 43,314.5 50,312 57,309 70,306 83,305 97,305 110,305 116,306 123,309 137,312 149,315 157,322 163,326 177,333 190,337 203,341 210,346 223,351 230,352 240,357.5 257,361 263,366 270,374 277,378 290,386.5 297,388 303,390 317,398 323,398.5 330,401.5 363,401.5 410,400.5 440,400 463,398.5 470,395.5 477,393 484,392 497,388',
      '503,87 510,118 517,119 524,124 537,137.5 544,137 550,129 557,114 564,111 570,113 577,116 584,119 591,127 597,136 604,142 611,146 617,155 624,163 631,169 637,172 651,179 657,183 664,184 671,184 684,185.5 697,188 704,191 710,201 717,207 724,210 731,215 744,219 751,226 764,234 771,236 784,243 797,251 811,257 817,260 824,263 831,268 837,271 849,275 857,279 870,281 878,290 890,294 904,299 911,303 918,317 924,327 931,347 937,349 990,349.5 1035,351 1045,354 1070,359 1125,360 1137,362 1150,363'];
    vwap.forEach(p => { s += band(p, '#fff200', 2, '6 1'); });
    s += marks;

    // last price, frame
    s += hline(1157, 1379, 626, '#ffffff', 2, '6 2');
    s += hline(36, 1380, 712.5, '#2b3352') + vline(1379.5, 36, 713, '#2b3352');

    // session labels
    [[140, 189, 'U-H'], [37, 264, 'U-IH'], [37, 364, 'U-IL'], [142, 555, 'U-L'], [481, 150, 'A-H'], [483, 635, 'A-L'], [505, 38, 'U-IH'], [505, 205, 'U-IL'],
      [822, 38, 'U-H'], [824, 644, 'U-L'], [1139, 399, 'A-H'], [1141, 700, 'A-L']].forEach(([x, y, t]) => {
      s += `<text x="${x}" y="${y}" font-size="7" font-weight="700" fill="#e4ebf8">${t}</text>`;
    });
    document.getElementById('chart').innerHTML = `<g shape-rendering="crispEdges">${s}</g>`;

    // ---- cumulative delta: top, bottom, up, [high, low] ----
    const cvd = [
      [778,780,0,777,782],[778,780,1,777,783],[773,779,1,772],[773,779,0,772],[774,779,1,774,781],[774,778,0,773],[776,780,0,775],[778,783,0,777],[780,783,1,780,785],[780,783,0,776],
      [781,784,0,779],[782,788,0],[787,791,0,787,797],[790,793,0,788],[792,795,0,790],[794,800,0,793],[799,806,0],[805,814,0,804],[812,816,0,812,821],[815,821,0],
      [820,822,0,818,824],[821,824,0],[821,824,1],[821,825,0,820],[824,828,0,823],[827,835,0,826],[834,836,1,833,837],[833,837,0],[835,837,0],[834,837,1,833],
      [834,837,0,832],[835,837,0,829],[836,839,0],[838,841,0,837],[839,846,0],[842,846,1,841,848],[840,843,1,838],[839,842,1],[839,842,0],[839,842,1,839,844],
      [830,840,1,830],[826,831,1,823],[817,827,1,816],[816,818,1,807,826],[815,817,1],[812,817,1],[811,814,1],[811,813,1],[810,812,1],[810,812,0],
      [810,812,1],[809,811,1],[809,811,1],[808,810,1],[804,809,1],[802,806,1],[802,804,1],[801,804,1,800],[800,803,1],[798,802,1],
      [793,799,1],[792,794,0],[791,794,1,790],[788,792,1,787],[771,789,1],[768,772,1,767],[765,769,1,765,772],[764,767,1,759],[763,767,0],
      [780,787,0,778],[776,787,1,775,793],[776,780,0,774],[779,783,0,777],[782,787,0,779],[779,787,1,778],[772,780,1],[763,773,1,762],[763,767,0],
      [766,773,0,765],[772,776,0,771,778],[770,776,1,769],[769,772,0,765],[769,772,1],[762,771,1,762,774],[762,767,0,760],[766,773,0],[772,777,0,771],[770,777,1,769],
      [769,771,1,765],[764,770,1],[753,765,1,752],[751,754,1,751,757],[744,753,1,743],[744,747,0,742],[746,749,0,743],[747,751,0,742],[748,753,0,747],[751,754,0,750],
      [753,757,0],[756,760,0],[759,767,0],[766,771,0,766,775],[765,771,1],[765,768,0,761],[767,774,0],[773,777,0,773,780],[770,777,1],[765,773,1,764],
      [764,767,0,761],[766,771,0],[769,771,1],[768,771,1,766],[768,772,0],[768,771,1,768,776],[767,770,1,766],[762,768,1],[757,763,1],[755,758,1,753],
      [752,756,1,751,759],[747,753,1,745],[745,748,1,744],[745,750,0,744],[749,752,0],[750,752,1],[751,755,0,750],[754,761,0,753],[761,763,0,760],[762,773,0,760],
      [772,782,0,772,783],[776,782,1,775],[776,779,0,774],[779,785,0,777,787],[769,785,1,768],[763,770,1,749],[757,764,1],[755,758,1],[749,756,1],[748,750,0],
      [748,750,0],[747,750,1],[745,748,1,744],[745,747,1],[746,748,1],[745,747,0],[745,747,0],[746,749,0],[746,749,1],[746,748,1],
      [746,748,0],[745,748,1,744],[743,746,1,741],[738,744,1,735],[738,741,0,737],[737,741,1,736],[734,738,1],[733,736,1,732],[732,734,1],[732,734,0],
      [732,734,1],[732,734,1],[732,734,1],[731,733,1],[731,734,1,730],[731,733,0,730],[731,734,0,730],[733,736,0],[733,736,1,732,737],
    ];
    let c = '';
    cvd.forEach(([top, bot, up, hi = top, lo = bot], i) => {
      if (!candles[i]) return;
      const x = candles[i][0], wide = candles[i][6], left = wide ? x - 3 : x - 2, w = wide ? 7 : 5;
      c += rect(x, hi, 1, lo - hi, up ? GREEN : RED) + rect(left, top, w, bot - top, up ? GREEN : RED);
      if (bot - top > 2) c += rect(left + 1, top + 1, w - 2, bot - top - 2, up ? '#0f8a5c' : '#ea3a44');
    });
    c += vline(1379.5, 728, 850, '#2b3352') + hline(36, 1380, 849, '#242b47', 2);
    document.getElementById('cvd').innerHTML = `<g shape-rendering="crispEdges">${c}</g>`;
  </script>
</body>
</html>
